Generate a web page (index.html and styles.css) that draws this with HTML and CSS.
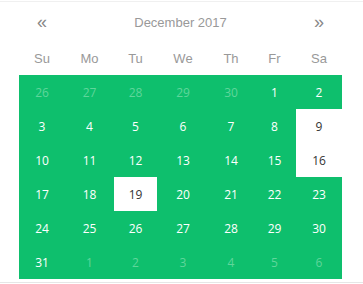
FILE: index.html
```html
<!DOCTYPE html>
<html lang="en">
<head>
    <meta charset="UTF-8">
    <meta name="viewport" content="width=device-width, initial-scale=1.0">
    <title>Datepicker</title>
    <link rel="stylesheet" href="styles.css">
</head>
<body>
    <div class="picker">
        <div class="picker-head">
            <span class="nav prev">&laquo;</span>
            <span class="month">December 2017</span>
            <span class="nav next">&raquo;</span>
        </div>

        <div class="week">
            <span>Su</span><span>Mo</span><span>Tu</span><span>We</span><span>Th</span><span>Fr</span><span>Sa</span>
        </div>

        <div class="days">
            <span class="day other">26</span>
            <span class="day other">27</span>
            <span class="day other">28</span>
            <span class="day other">29</span>
            <span class="day other">30</span>
            <span class="day">1</span>
            <span class="day">2</span>

            <span class="day">3</span>
            <span class="day">4</span>
            <span class="day">5</span>
            <span class="day">6</span>
            <span class="day">7</span>
            <span class="day">8</span>
            <span class="day free">9</span>

            <span class="day">10</span>
            <span class="day">11</span>
            <span class="day">12</span>
            <span class="day">13</span>
            <span class="day">14</span>
            <span class="day">15</span>
            <span class="day free">16</span>

            <span class="day">17</span>
            <span class="day">18</span>
            <span class="day free">19</span>
            <span class="day">20</span>
            <span class="day">21</span>
            <span class="day">22</span>
            <span class="day">23</span>

            <span class="day">24</span>
            <span class="day">25</span>
            <span class="day">26</span>
            <span class="day">27</span>
            <span class="day">28</span>
            <span class="day">29</span>
            <span class="day">30</span>

            <span class="day">31</span>
            <span class="day other">1</span>
            <span class="day other">2</span>
            <span class="day other">3</span>
            <span class="day other">4</span>
            <span class="day other">5</span>
            <span class="day other">6</span>
        </div>
    </div>
</body>
</html>
```

FILE: styles.css
```css
body {
    margin: 0;
    background-color: #fff;
    font-family: 'Liberation Sans', Arial, sans-serif;
}

.picker {
    margin-top: 1px;
    padding: 0 21px 3px 19px;
    border-top: 1px solid #f0f0f0;
    border-bottom: 1px solid #e6e6e6;
    width: 323px;
}

/* shared column widths for head, week names and days */
.picker-head,
.week,
.days {
    display: grid;
    grid-template-columns: 46px 49px 43px 52px 44px 43px 46px;
}

.picker-head {
    height: 40px;
    align-items: center;
    color: #999;
}

.nav {
    text-align: center;
    font-size: 18px;
    color: #888;
    cursor: pointer;
}

.month {
    grid-column: 2 / 7;
    text-align: center;
    font-size: 13px;
    color: #999;
}

.week {
    height: 33px;
    align-items: center;
    font-size: 13px;
    color: #999;
    text-align: center;
}

.days {
    background-color: #0ebf6d;
    grid-auto-rows: 34px;
    font-family: 'Open Sans', 'Noto Sans', sans-serif;
    font-size: 12px;
}

.day {
    display: flex;
    justify-content: center;
    align-items: center;
    color: #fff;
}

.day.other {
    color: #5fd69b;
}

.day.free {
    background-color: #fff;
    color: #333;
}
```
